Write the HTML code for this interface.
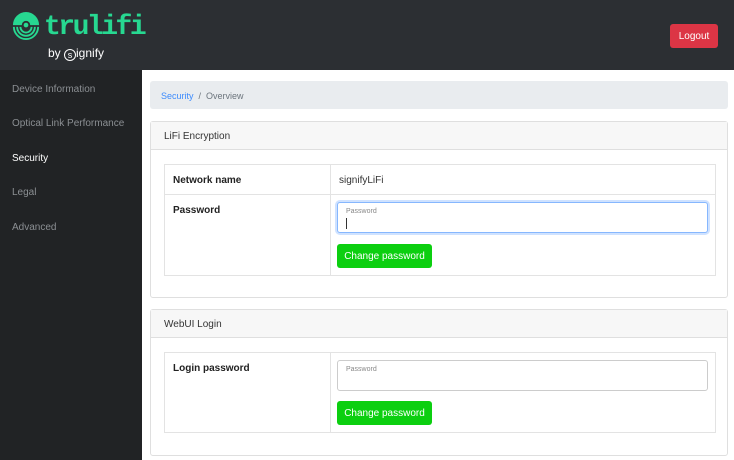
<!DOCTYPE html>
<html><head><style>
*{box-sizing:border-box;margin:0;padding:0}
body{width:734px;height:460px;overflow:hidden;background:#fff;font-family:"Liberation Sans",sans-serif;position:relative}
.abs{position:absolute}
.hdr{left:0;top:0;width:734px;height:70px;background:#2c2f33}
.side{left:0;top:70px;width:142px;height:390px;background:#212325}
.side div{position:absolute;left:12px;font-size:10px;color:#8b8f93}
.card{position:absolute;left:150px;width:578px;border:1px solid #dfdfdf;border-radius:3px;background:#fff}
.ch{height:28px;background:#f7f7f7;border-bottom:1px solid #dfdfdf;font-size:10px;color:#333;padding:9px 0 0 13px}
.tbl{position:absolute;left:13px;width:552px;border:1px solid #e3e3e3}
.lbl{position:absolute;left:8px;font-size:10px;font-weight:bold;color:#222}
.vline{position:absolute;left:165px;top:0;bottom:0;border-left:1px solid #e3e3e3}
.inp{position:absolute;left:172px;width:371px;height:31px;border:1px solid #ccc;border-radius:3px;background:#fff}
.inp span{position:absolute;left:8px;top:5px;font-size:7px;color:#888}
.btn{position:absolute;left:172px;width:95px;height:24px;background:#0ccf10;border-radius:3px;color:#fff;font-size:10px;display:flex;align-items:center;justify-content:center}
</style></head><body>
<div class="abs hdr"></div>
<svg class="abs" style="left:12px;top:12px" width="28" height="28" viewBox="0 0 30 30">
<path d="M1 14 A14 14 0 0 1 29 14 Z" fill="#27d891"/>
<circle cx="15" cy="14" r="4.5" fill="#2c2f33"/>
<circle cx="15" cy="14" r="2.5" fill="#27d891"/>
<path d="M9 16 A6 6 0 0 0 21 16" stroke="#27d891" stroke-width="2" fill="none"/>
<path d="M5.5 16 A9.5 9.5 0 0 0 24.5 16" stroke="#27d891" stroke-width="2" fill="none"/>
<path d="M2 16 A13 13 0 0 0 28 16" stroke="#27d891" stroke-width="2" fill="none"/>
</svg>
<div class="abs" style="left:44px;top:12px;font-family:'Liberation Mono',monospace;font-weight:bold;font-size:28px;line-height:32px;color:#27d891;letter-spacing:-2.5px">trulifi</div>
<div class="abs" style="left:48px;top:46px;font-size:12px;color:#fff">by <span style="display:inline-block;width:12px;height:12px;border:1.3px solid #fff;border-radius:50%;font-size:9px;text-align:center;line-height:10px;vertical-align:-1px">s</span>ignify</div>
<div class="abs" style="left:670px;top:24px;width:48px;height:24px;background:#dc3545;border-radius:3px;color:#fff;font-size:10px;display:flex;align-items:center;justify-content:center">Logout</div>
<div class="abs side">
<div style="top:14px">Device Information</div>
<div style="top:48px">Optical Link Performance</div>
<div style="top:83px;color:#fff">Security</div>
<div style="top:117px">Legal</div>
<div style="top:152px">Advanced</div>
</div>
<div class="abs" style="left:150px;top:81px;width:578px;height:28px;background:#e9ecef;border-radius:3px;font-size:9px;padding:10px 0 0 11px;color:#6c757d"><span style="color:#3d8bfd">Security</span> &nbsp;/&nbsp; Overview</div>
<div class="card" style="top:121px;height:177px">
<div class="ch">LiFi Encryption</div>
<div class="tbl" style="top:42px;height:112px">
<div class="vline"></div>
<div style="position:absolute;left:0;right:0;top:29px;border-top:1px solid #e3e3e3"></div>
<div class="lbl" style="top:10px">Network name</div>
<div style="position:absolute;left:174px;top:10px;font-size:10px;color:#333">signifyLiFi</div>
<div class="lbl" style="top:40px">Password</div>
<div class="inp" style="top:37px;border-color:#86b7fe;box-shadow:0 0 0 2px #cfe2ff"><span>Password</span><span style="top:15px;left:8px;width:1px;height:11px;background:#333"></span></div>
<div class="btn" style="top:79px">Change password</div>
</div>
</div>
<div class="card" style="top:309px;height:147px">
<div class="ch">WebUI Login</div>
<div class="tbl" style="top:42px;height:81px">
<div class="vline"></div>
<div class="lbl" style="top:10px">Login password</div>
<div class="inp" style="top:7px"><span>Password</span></div>
<div class="btn" style="top:48px">Change password</div>
</div>
</div>
</body></html>
